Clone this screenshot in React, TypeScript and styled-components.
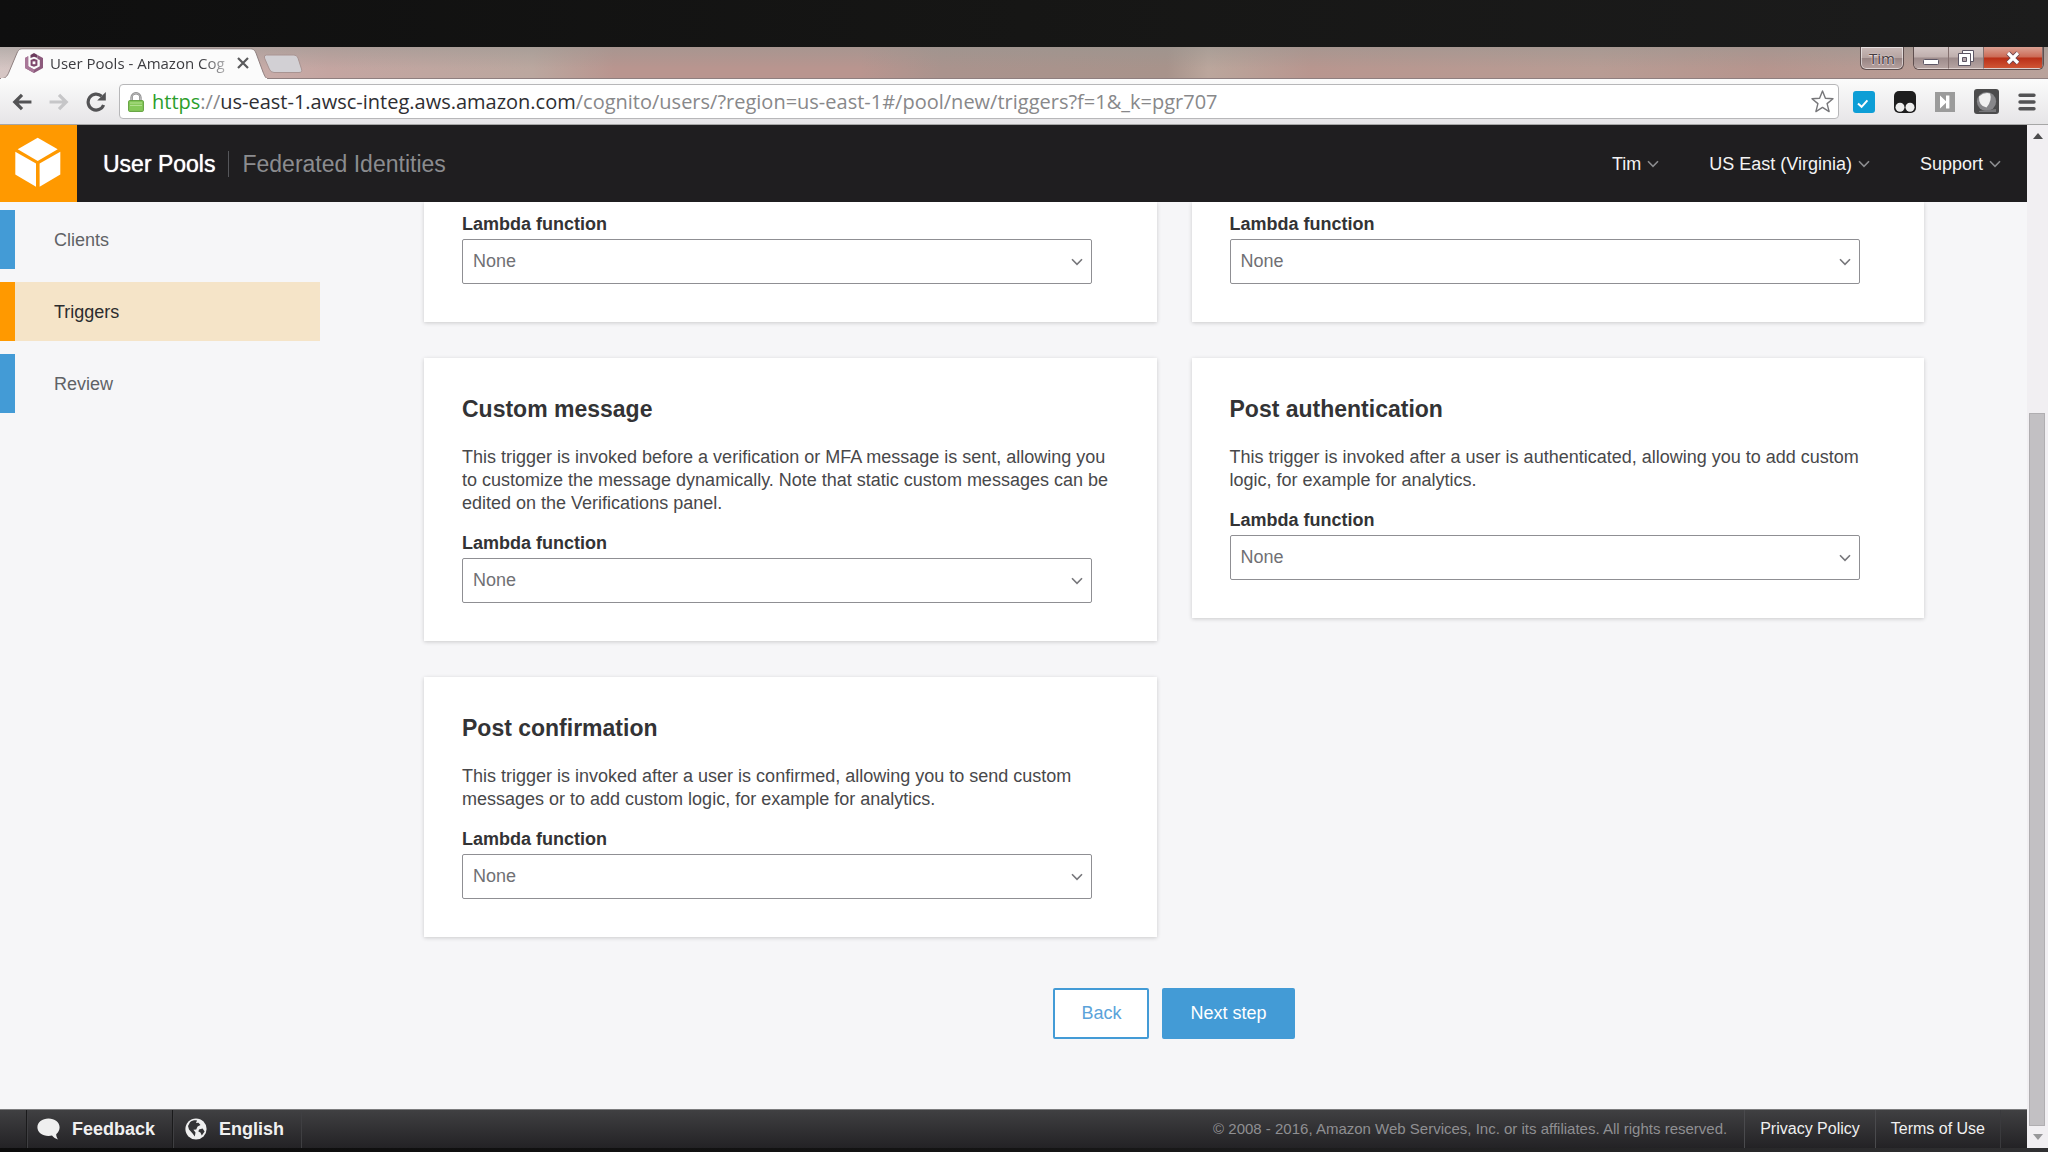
import React from "react";
import styled, { createGlobalStyle, css } from "styled-components";

const GlobalStyle = createGlobalStyle`
  *, *::before, *::after { box-sizing: border-box; }
  body {
    margin: 0;
    background: #111;
    font-family: "Liberation Sans", Arial, sans-serif;
    font-size: 18px;
    color: #444;
  }
  button, select { font: inherit; color: inherit; }
  button { cursor: pointer; }
  a { color: inherit; text-decoration: none; }
  h2, p { margin: 0; }
`;

const Screen = styled.div`
  display: flex;
  flex-direction: column;
  min-height: 100vh;
`;

const TopBezel = styled.div`
  height: 47px;
  background: linear-gradient(90deg, #0f0f0f, #161615 50%, #1c1c1c);
`;

const BottomBezel = styled.div`
  height: 4px;
  background: linear-gradient(90deg, #0c0c0c, #141414 50%, #303032);
`;

/* ---------- browser window ---------- */

const TitleBar = styled.div`
  display: flex;
  align-items: flex-end;
  height: 32px;
  border-bottom: 1px solid #8f7f7f;
  background:
    linear-gradient(180deg, rgba(150, 150, 145, 0.5), rgba(150, 150, 145, 0) 70%),
    linear-gradient(90deg, #d6c6c4 0, #c4a5a1 16%, #bba79f 26%, #b9958f 30%, #b9958f 42%,
      #aa938d 46%, #a8938b 57%, #bba69c 59%, #b8968f 64%, #b89c94 78%, #b6958e 86%, #b9a29b 100%);
`;

const Tab = styled.div`
  position: relative;
  display: flex;
  align-items: center;
  width: 268px;
  height: 31px;
  padding: 0 19px 1px 25px;
  margin-bottom: -1px;
`;

const TabShape = styled.svg`
  position: absolute;
  inset: 0;
  width: 268px;
  height: 31px;
`;

const TabLabel = styled.span`
  position: relative;
  flex: 1;
  margin-left: 7px;
  white-space: nowrap;
  font: 15px/24px "Open Sans", "Noto Sans", sans-serif;
  color: #3c3c40;
  mask-image: linear-gradient(90deg, #000 152px, rgba(0, 0, 0, 0.3) 178px);
`;

const PlainButton = styled.button`
  position: relative;
  display: flex;
  align-items: center;
  justify-content: center;
  flex: none;
  padding: 0;
  border: 0;
  background: none;
`;

const NewTab = styled(PlainButton)`
  align-self: center;
  margin-left: -5px;
  padding-top: 2px;
`;

const WindowControls = styled.div`
  display: flex;
  align-self: flex-start;
  gap: 9px;
  margin-left: auto;
  margin-right: 4px;
`;

const glass = css`
  border: 1px solid #5f4f4f;
  border-top: 0;
  border-radius: 0 0 6px 6px;
  box-shadow: inset 0 0 0 1px rgba(255, 255, 255, 0.55);
`;

const ProfileButton = styled.button`
  ${glass}
  width: 44px;
  height: 23px;
  padding: 0;
  background: linear-gradient(180deg, #c9bab8, #b5a3a0 50%, #978483 51%, #b5a09d);
  font: 15px/20px "Open Sans", sans-serif;
  color: #453c3e;
  text-shadow: 0 1px 1px #efe6e6, 0 0 2px #efe6e6;
`;

const ControlGroup = styled.div`
  ${glass}
  display: flex;
  height: 23px;
  overflow: hidden;
`;

const ControlButton = styled(PlainButton)<{ $close?: boolean }>`
  width: ${(p) => (p.$close ? 59 : 35)}px;
  border-right: 1px solid #84706f;
  border-bottom: 1px solid #ddd0ce;
  background: ${(p) =>
    p.$close
      ? "linear-gradient(180deg, #dba193, #cc6a55 48%, #b92f17 52%, #cf5434)"
      : "linear-gradient(180deg, #d3c6c5, #bfafad 48%, #9d8b8b 52%, #b5a3a1)"};
`;

const Toolbar = styled.div`
  display: flex;
  align-items: center;
  height: 46px;
  padding: 0 12px;
  border-bottom: 1px solid #a6a6a6;
  background: linear-gradient(180deg, #fbfbfb, #e6e5e7);
`;

const NavButtons = styled.div`
  display: flex;
  gap: 17px;
  margin-right: 12px;
`;

const Omnibox = styled.div`
  display: flex;
  align-items: center;
  flex: 1;
  height: 35px;
  padding: 0 4px 0 8px;
  border: 1px solid #b7b7b9;
  border-radius: 4px;
  background: #fff;
`;

const Url = styled.div`
  flex: 1;
  margin-left: 8px;
  outline: 0;
  white-space: nowrap;
  overflow: hidden;
  font: 20px/30px "Open Sans", "Noto Sans", sans-serif;
  color: #88888a;
`;

const UrlScheme = styled.span`
  color: #2b9e2b;
`;

const UrlHost = styled.span`
  color: #2e2e32;
`;

const Extensions = styled.div`
  display: flex;
  align-items: center;
  gap: 19px;
  margin-left: 14px;
`;

/* ---------- console page ---------- */

const Viewport = styled.div`
  display: flex;
  flex: 1;
`;

const Page = styled.div`
  display: flex;
  flex-direction: column;
  flex: 1;
  min-width: 0;
  background: #f6f6f8;
`;

const Header = styled.header`
  display: flex;
  align-items: center;
  height: 77px;
  padding-right: 26px;
  background: #1f1e20;
  color: #f4f4f4;
`;

const Logo = styled.a`
  width: 77px;
  height: 77px;
  background: #ff9900;
`;

const Services = styled.nav`
  display: flex;
  align-items: center;
  margin-left: 26px;
  font-size: 23px;
  line-height: 26px;
`;

const ServiceLink = styled.a<{ $active?: boolean }>`
  color: ${(p) => (p.$active ? "#fff" : "#8b8c8f")};
  text-shadow: ${(p) => (p.$active ? "0 0 1px #fff" : "none")};

  & + & {
    margin-left: 13px;
    padding-left: 13px;
    border-left: 1px solid #55565a;
  }
`;

const HeaderMenus = styled.div`
  display: flex;
  gap: 50px;
  margin-left: auto;
`;

const MenuButton = styled(PlainButton)`
  gap: 6px;
  line-height: 24px;
`;

const Body = styled.div`
  display: flex;
  flex: 1;
`;

const Sidebar = styled.nav`
  display: flex;
  flex-direction: column;
  gap: 13px;
  width: 320px;
  padding-top: 8px;
`;

const StepLink = styled.a<{ $active?: boolean }>`
  height: 59px;
  padding-left: 39px;
  border-left: 15px solid ${(p) => (p.$active ? "#ff9900" : "#439bd6")};
  background: ${(p) => (p.$active ? "#f5e4c8" : "transparent")};
  color: ${(p) => (p.$active ? "#2c2c2e" : "#606266")};
  line-height: 61px;
`;

const Main = styled.main`
  flex: 1;
  padding: 0 103px 70px 104px;
`;

const Columns = styled.div`
  display: grid;
  grid-template-columns: 1fr 1fr;
  align-items: start;
  gap: 35px;
`;

const Column = styled.div`
  display: flex;
  flex-direction: column;
  gap: 36px;
`;

const Card = styled.section<{ $continued?: boolean }>`
  padding: ${(p) => (p.$continued ? 11 : 38)}px 38px 38px;
  background: #fff;
  box-shadow: 0 1px 4px rgba(0, 0, 0, 0.18);
  clip-path: ${(p) => (p.$continued ? "inset(0 -6px -6px)" : "none")};
`;

const CardTitle = styled.h2`
  margin-bottom: 24px;
  font-size: 23px;
  line-height: 26px;
  color: #333335;
`;

const Description = styled.p`
  margin: 0 0 17px;
  line-height: 23px;
  color: #48484a;
`;

const FieldLabel = styled.label`
  display: block;
  margin-bottom: 3px;
  font-weight: bold;
  line-height: 23px;
  color: #333335;
`;

const SelectBox = styled.div`
  position: relative;
  width: 96%;
  height: 45px;
`;

const Select = styled.select`
  width: 100%;
  height: 45px;
  padding: 0 30px 2px 10px;
  border: 1px solid #8f8f93;
  border-radius: 2px;
  background: #fff;
  color: #707074;
  appearance: none;
`;

const SelectArrow = styled.span`
  position: absolute;
  top: 0;
  bottom: 0;
  right: 9px;
  display: flex;
  align-items: center;
  pointer-events: none;
`;

const Actions = styled.div`
  display: flex;
  justify-content: center;
  gap: 13px;
  margin-top: 51px;
`;

const ActionButton = styled.button<{ $primary?: boolean }>`
  height: 51px;
  padding: 0 26px;
  border: 2px solid #439bd6;
  border-radius: 2px;
  background: ${(p) => (p.$primary ? "#439bd6" : "#fff")};
  color: ${(p) => (p.$primary ? "#fff" : "#5ba3da")};
`;

const Footer = styled.footer`
  display: flex;
  height: 39px;
  padding: 0 26px;
  border-top: 1px solid #7c7c7e;
  background: linear-gradient(180deg, #404042, #232225);
  line-height: 38px;
  font-size: 16px;
  color: #f0f0f0;
`;

const FooterItem = styled.a`
  display: flex;
  align-items: center;
  gap: 12px;
  padding: 0 17px 0 10px;
  border-left: 1px solid #1a1a1b;
  box-shadow: inset 1px 0 #3f3f42;
  font-size: 18px;
  font-weight: bold;

  & + & {
    padding-left: 12px;
    border-right: 1px solid #3f3f42;
  }
`;

const Copyright = styled.p`
  margin-left: auto;
  margin-right: 17px;
  font-size: 15px;
  color: #8f8f92;
`;

const FooterLink = styled.a`
  padding: 0 15px;
  border-left: 1px solid #4a4a4d;

  &:last-child {
    border-right: 1px solid #3a3a3d;
  }
`;

const Scrollbar = styled.div`
  display: flex;
  flex-direction: column;
  width: 21px;
  background: #f1eff2;
`;

const ScrollArrow = styled(PlainButton)`
  height: 22px;
`;

const Track = styled.div`
  display: grid;
  flex: 1;
  grid-template-rows: 266fr 713fr;
  padding: 0 3px 0 2px;
`;

const Thumb = styled.div`
  grid-row: 2;
  border: 1px solid #b0aeb1;
  background: #c2c0c3;
`;

/* ---------- icons ---------- */

const Chevron = ({ color = "#8b8c8f" }: { color?: string }) => (
  <svg width="12" height="8" viewBox="0 0 12 8" fill="none" stroke={color} strokeWidth="1.6">
    <path d="M1 1.2 6 6.4 11 1.2" />
  </svg>
);

const CubeLogo = () => (
  <svg width="77" height="77" viewBox="0 0 77 77" fill="#fff">
    <path d="M37.7 12.7 57.7 24.3 37.7 36 17.7 24.3Z" />
    <path d="M15.3 26.7 36 38.6V61.8L15.3 49.5Z" />
    <path d="M60.3 26.7 39.6 38.6V61.8L60.3 49.5Z" />
  </svg>
);

const CognitoMark = styled.svg`
  position: relative;
  flex: none;
`;

const CognitoIcon = () => (
  <CognitoMark width="18" height="20" viewBox="0 0 18 20">
    <path d="M9 0 5.5 2V5L9 3.8 12.5 5V2Z" fill="#6b3a5c" />
    <path d="M12.5 2 18 5V15L9 20 0 15V5L3.2 3.2V13.2L9 16.4 14.8 13.2V7L12.5 6Z" fill="#8c5a7c" />
    <path d="M0 5 3.2 3.2V13.2L9 16.4V20L0 15Z" fill="#a87798" />
    <path d="M5.6 7 9 5.8 12.4 7V12.4L9 13.8 5.6 12.4Z" fill="#7d476c" />
    <rect x="7.6" y="8.4" width="2.8" height="2.8" fill="#fff" />
  </CognitoMark>
);

const ArrowIcon = ({ forward }: { forward?: boolean }) => (
  <svg width="20" height="18" viewBox="0 0 21 20" fill="none" stroke={forward ? "#c6c6c8" : "#535355"} strokeWidth="3.6">
    {forward ? <path d="M0 10H18M10.5 2 18.5 10 10.5 18" /> : <path d="M21 10H3M10.5 2 2.5 10 10.5 18" />}
  </svg>
);

const ReloadIcon = () => (
  <svg width="21" height="20" viewBox="0 0 21 20">
    <path d="M17.6 13A8 8 0 1 1 15.6 4.2" fill="none" stroke="#535355" strokeWidth="3.2" />
    <path d="M19.8 0V8.6H11.2Z" fill="#535355" />
  </svg>
);

const LockIcon = () => (
  <svg width="16" height="20" viewBox="0 0 16 20">
    <path d="M3.6 10V5.6a4.4 4.4 0 0 1 8.8 0V10" fill="none" stroke="#858585" strokeWidth="2.4" />
    <path d="M3.6 10V5.6a4.4 4.4 0 0 1 8.8 0V10" fill="none" stroke="#cfcfcf" strokeWidth="0.8" />
    <rect x="0.6" y="8.6" width="14.8" height="10.8" rx="1" fill="#86c95a" stroke="#5f9f3b" />
    <path d="M2 11H14M2 13.5H14" stroke="#b1e08e" strokeWidth="1.2" />
  </svg>
);

const StarIcon = () => (
  <svg width="23" height="23" viewBox="0 0 23 23" fill="#fff" stroke="#77777a" strokeWidth="1.4" strokeLinejoin="round">
    <path d="M11.5 1 14.4 8.2 22 8.7 16.1 13.6 18.1 21.6 11.5 17.4 4.9 21.6 6.9 13.6 1 8.7 8.6 8.2Z" />
  </svg>
);

const CheckExtension = () => (
  <svg width="22" height="22" viewBox="0 0 22 22">
    <rect width="22" height="22" rx="3" fill="#0d9ed6" />
    <path d="M5 12.4 8.6 15.8 14.4 9.4" fill="none" stroke="#fff" strokeWidth="2" />
  </svg>
);

const EyesExtension = () => (
  <svg width="22" height="22" viewBox="0 0 22 22">
    <rect width="22" height="22" rx="5" fill="#1d1d1e" />
    <circle cx="6" cy="16.2" r="4.5" fill="#eee" />
    <circle cx="16" cy="16.2" r="4.5" fill="#eee" />
  </svg>
);

const SkipExtension = () => (
  <svg width="20" height="20" viewBox="0 0 20 20">
    <rect width="20" height="20" fill="#9b9b9b" />
    <path d="M5 3.400V16.600L11 10.800V16.600H14.400V3.400H11V9.200Z" fill="#fff" />
  </svg>
);

const ShieldExtension = () => (
  <svg width="25" height="25" viewBox="0 0 25 25">
    <rect width="25" height="25" rx="3" fill="#4c4c4d" />
    <circle cx="12.5" cy="12.5" r="9.6" fill="#87878a" />
    <path d="M5 7.500Q10 3 16 4.400Q18.500 11 12.500 18.600Q4.500 17 5 7.500Z" fill="#f1f1f1" />
    <path d="M5 22 22 20V23H5Z" fill="#77777a" />
  </svg>
);

const MenuIcon = () => (
  <svg width="18" height="18" viewBox="0 0 18 18" stroke="#535355" strokeWidth="3.4" strokeLinecap="round">
    <path d="M2 2.2H16M2 9H16M2 15.8H16" />
  </svg>
);

const BubbleIcon = () => (
  <svg width="23" height="22" viewBox="0 0 23 22" fill="#efefef">
    <path d="M11.5 0.5C5.2 0.5 0.4 4.3 0.4 9.3S5.2 18 11.5 18c1.3 0 2.4-.1 3.5-.4 1.4 1.9 3.6 3.3 6.2 3.9-1.300-1.500-2-3.200-2-5.300 2.200-1.700 3.400-4.100 3.400-6.900C22.600 4.300 17.800.5 11.500.5Z" />
  </svg>
);

const GlobeIcon = () => (
  <svg width="22" height="22" viewBox="0 0 22 22">
    <circle cx="11" cy="11" r="10.6" fill="#efefef" />
    <path d="M5 4.200C7 2.600 10 2 12 2.600L11 5 13.500 4.800 15.500 7 12.600 8.500 11.200 11.400 8.400 11.800 10.500 14.400 9.800 18.500 7.600 15.500 4 11.600 3 8Z" fill="#343436" />
    <path d="M14 11.400 17.600 10.600 19.600 13.400 16.800 17.400 15.400 14.600 13.400 13.600Z" fill="#343436" />
  </svg>
);

/* ---------- page parts ---------- */

const LambdaField = ({ id }: { id: string }) => (
  <>
    <FieldLabel htmlFor={id}>Lambda function</FieldLabel>
    <SelectBox>
      <Select id={id} defaultValue="None">
        <option>None</option>
      </Select>
      <SelectArrow>
        <Chevron color="#77777b" />
      </SelectArrow>
    </SelectBox>
  </>
);

const TriggerCard = ({ id, title, text }: { id: string; title: string; text: string }) => (
  <Card>
    <CardTitle>{title}</CardTitle>
    <Description>{text}</Description>
    <LambdaField id={id} />
  </Card>
);

const BrowserChrome = () => (
  <>
    <TitleBar>
      <Tab>
        <TabShape viewBox="0 0 268 31">
          <path
            d="M0 31C5 30.500 7 29 9 24L17 5C18.500 1.500 20 .8 23 .8H249C253 .8 254.500 1.500 256 5L263 24C265 29 266 30.500 268 31Z"
            fill="#fbfbfb"
            stroke="#8f8080"
          />
          <path d="M1 31H267" stroke="#fbfbfb" strokeWidth="2" />
        </TabShape>
        <CognitoIcon />
        <TabLabel>User Pools - Amazon Cog</TabLabel>
        <PlainButton aria-label="Close tab">
          <svg width="12" height="12" viewBox="0 0 12 12" stroke="#5a5a5c" strokeWidth="2.200">
            <path d="M1 1 11 11M11 1 1 11" />
          </svg>
        </PlainButton>
      </Tab>
      <NewTab aria-label="New tab">
        <svg width="40" height="20" viewBox="0 0 40 20">
          <path d="M3.500 1H31Q34 1 35 4L38.500 15Q39.500 18.500 36 18.500H11Q7.500 18.500 6.300 15L1.500 4Q.5 1 3.500 1Z" fill="#d2d0d4" stroke="#a99492" />
        </svg>
      </NewTab>
      <WindowControls>
        <ProfileButton>Tim</ProfileButton>
        <ControlGroup>
          <ControlButton aria-label="Minimize">
            <svg width="16" height="16" viewBox="0 0 16 16">
              <rect x="0.500" y="9.500" width="15" height="5" rx="1" fill="#fff" stroke="#5d5664" />
            </svg>
          </ControlButton>
          <ControlButton aria-label="Restore">
            <svg width="16" height="16" viewBox="0 0 16 16" fill="#fff" stroke="#5d5664">
              <path d="M4.500 0.500H15.500V11.500H4.500Z" />
              <path d="M0.500 3.500H12.500V15.500H0.500Z" />
              <path d="M4.500 7.500H8.500V11.500H4.500Z" fill="#b5a6aa" />
            </svg>
          </ControlButton>
          <ControlButton $close aria-label="Close">
            <svg width="16" height="14" viewBox="0 0 16 14" fill="none">
              <path d="M3 2 13 12M13 2 3 12" stroke="#6a4450" strokeWidth="5" />
              <path d="M3 2 13 12M13 2 3 12" stroke="#fff" strokeWidth="3.200" />
            </svg>
          </ControlButton>
        </ControlGroup>
      </WindowControls>
    </TitleBar>
    <Toolbar>
      <NavButtons>
        <PlainButton aria-label="Back in history"><ArrowIcon /></PlainButton>
        <PlainButton aria-label="Forward in history"><ArrowIcon forward /></PlainButton>
        <PlainButton aria-label="Reload"><ReloadIcon /></PlainButton>
      </NavButtons>
      <Omnibox>
        <LockIcon />
        <Url role="textbox" aria-label="Address" contentEditable suppressContentEditableWarning spellCheck={false}>
          <UrlScheme>https</UrlScheme>://<UrlHost>us-east-1.awsc-integ.aws.amazon.com</UrlHost>
          /cognito/users/?region=us-east-1#/pool/new/triggers?f=1&amp;_k=pgr707
        </Url>
        <PlainButton aria-label="Bookmark this page"><StarIcon /></PlainButton>
      </Omnibox>
      <Extensions>
        <PlainButton aria-label="Tasks"><CheckExtension /></PlainButton>
        <PlainButton aria-label="Scripts"><EyesExtension /></PlainButton>
        <PlainButton aria-label="Skip"><SkipExtension /></PlainButton>
        <PlainButton aria-label="Privacy"><ShieldExtension /></PlainButton>
        <PlainButton aria-label="Menu"><MenuIcon /></PlainButton>
      </Extensions>
    </Toolbar>
  </>
);

const menus = ["Tim", "US East (Virginia)", "Support"];
const steps = ["Clients", "Triggers", "Review"];

export default function App() {
  return (
    <Screen>
      <GlobalStyle />
      <TopBezel />
      <BrowserChrome />
      <Viewport>
        <Page>
          <Header>
            <Logo href="#" aria-label="Console home"><CubeLogo /></Logo>
            <Services>
              <ServiceLink href="#" $active>User Pools</ServiceLink>
              <ServiceLink href="#">Federated Identities</ServiceLink>
            </Services>
            <HeaderMenus>
              {menus.map((name) => (
                <MenuButton key={name}>
                  {name}
                  <Chevron />
                </MenuButton>
              ))}
            </HeaderMenus>
          </Header>
          <Body>
            <Sidebar>
              {steps.map((name) => (
                <StepLink key={name} href="#" $active={name === "Triggers"}>{name}</StepLink>
              ))}
            </Sidebar>
            <Main>
              <Columns>
                <Column>
                  <Card $continued><LambdaField id="lambda-left" /></Card>
                  <TriggerCard
                    id="lambda-custom-message"
                    title="Custom message"
                    text="This trigger is invoked before a verification or MFA message is sent, allowing you to customize the message dynamically. Note that static custom messages can be edited on the Verifications panel."
                  />
                  <TriggerCard
                    id="lambda-post-confirmation"
                    title="Post confirmation"
                    text="This trigger is invoked after a user is confirmed, allowing you to send custom messages or to add custom logic, for example for analytics."
                  />
                </Column>
                <Column>
                  <Card $continued><LambdaField id="lambda-right" /></Card>
                  <TriggerCard
                    id="lambda-post-authentication"
                    title="Post authentication"
                    text="This trigger is invoked after a user is authenticated, allowing you to add custom logic, for example for analytics."
                  />
                </Column>
              </Columns>
              <Actions>
                <ActionButton>Back</ActionButton>
                <ActionButton $primary>Next step</ActionButton>
              </Actions>
            </Main>
          </Body>
          <Footer>
            <FooterItem href="#"><BubbleIcon />Feedback</FooterItem>
            <FooterItem href="#"><GlobeIcon />English</FooterItem>
            <Copyright>© 2008 - 2016, Amazon Web Services, Inc. or its affiliates. All rights reserved.</Copyright>
            <FooterLink href="#">Privacy Policy</FooterLink>
            <FooterLink href="#">Terms of Use</FooterLink>
          </Footer>
        </Page>
        <Scrollbar>
          <ScrollArrow aria-label="Scroll up">
            <svg width="10" height="6" viewBox="0 0 10 6" fill="#4c4c4e"><path d="M0 6 5 0 10 6Z" /></svg>
          </ScrollArrow>
          <Track><Thumb /></Track>
          <ScrollArrow aria-label="Scroll down">
            <svg width="10" height="6" viewBox="0 0 10 6" fill="#98989a"><path d="M0 0 5 6 10 0Z" /></svg>
          </ScrollArrow>
        </Scrollbar>
      </Viewport>
      <BottomBezel />
    </Screen>
  );
}
